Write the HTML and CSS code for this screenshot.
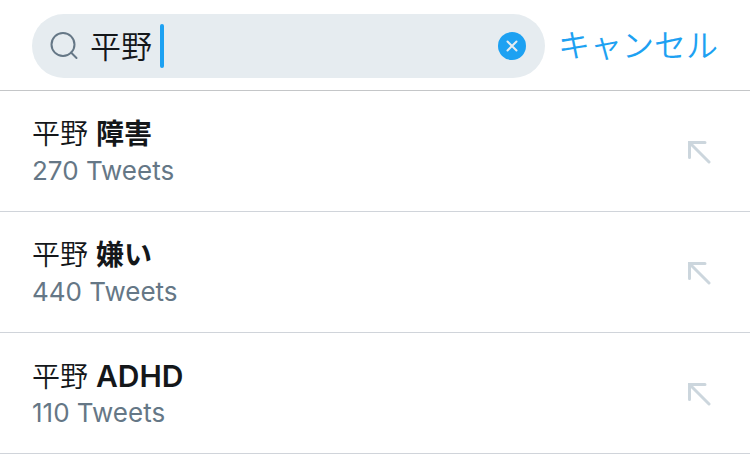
FILE: index.html
```html
<!DOCTYPE html>
<html lang="ja">
<head>
<meta charset="utf-8">
<meta name="viewport" content="width=device-width, initial-scale=1">
<title>平野</title>
<link rel="stylesheet" href="styles.css">
</head>
<body>
<form class="search-bar" role="search">
  <div class="search-field">
    <svg class="search-icon" viewBox="0 0 28 28" aria-hidden="true"><circle cx="13" cy="12.5" r="11.5"/><path d="M21 20.5L26.5 26"/></svg>
    <div class="query">
      <input class="query-input" type="text" value="平野" aria-label="検索">
      <span class="caret"></span>
    </div>
    <button class="clear" type="button" aria-label="消去"><svg viewBox="0 0 28 28" aria-hidden="true"><path d="M9.5 9.5L18.5 18.5M18.5 9.5L9.5 18.5"/></svg></button>
  </div>
  <button class="cancel" type="button">キャンセル</button>
</form>
<ul class="suggestions">
  <li><a class="suggestion" href="#">
    <span class="text"><span class="term">平野 <b>障害</b></span><span class="count">270 Tweets</span></span>
    <svg class="arrow" viewBox="0 0 24 24" aria-hidden="true"><path d="M2.5 17.5V2.5H18M2.5 2.5L22 22"/></svg>
  </a></li>
  <li><a class="suggestion" href="#">
    <span class="text"><span class="term">平野 <b>嫌い</b></span><span class="count">440 Tweets</span></span>
    <svg class="arrow" viewBox="0 0 24 24" aria-hidden="true"><path d="M2.5 17.5V2.5H18M2.5 2.5L22 22"/></svg>
  </a></li>
  <li><a class="suggestion" href="#">
    <span class="text"><span class="term">平野 <b class="latin">ADHD</b></span><span class="count">110 Tweets</span></span>
    <svg class="arrow" viewBox="0 0 24 24" aria-hidden="true"><path d="M2.5 17.5V2.5H18M2.5 2.5L22 22"/></svg>
  </a></li>
</ul>
</body>
</html>
```
FILE: styles.css
```css
* {
  box-sizing: border-box;
}

body {
  margin: 0;
  background: #fff;
  color: #14171a;
  font-family: Inter, "Noto Sans CJK JP", sans-serif;
}

button {
  border: 0;
  padding: 0;
  background: none;
  font: inherit;
  cursor: pointer;
}

.search-bar {
  display: flex;
  align-items: center;
  gap: 13px;
  padding: 14px 32px 12px;
  border-bottom: 1px solid #c4c6c8;
}

.search-field {
  display: flex;
  flex: 1;
  align-items: center;
  gap: 12px;
  min-width: 0;
  height: 64px;
  padding: 0 19px 0 18px;
  border-radius: 32px;
  background: #e6ecf0;
}

.search-icon {
  flex: none;
  width: 28px;
  height: 28px;
  fill: none;
  stroke: #657786;
  stroke-width: 2;
  stroke-linecap: round;
}

.query {
  position: relative;
  flex: 1;
  min-width: 0;
}

.query-input {
  display: block;
  width: 100%;
  height: 44px;
  padding: 0 0 4px;
  border: 0;
  outline: 0;
  background: none;
  color: inherit;
  font-family: inherit;
  font-size: 31px;
  font-weight: 350;
}

.caret {
  position: absolute;
  top: 0;
  left: 70px;
  width: 4px;
  height: 44px;
  border-radius: 2px;
  background: #1da1f2;
}

.clear {
  flex: none;
  width: 28px;
  height: 28px;
  border-radius: 50%;
  background: #1da1f2;
}

.clear svg {
  display: block;
  fill: none;
  stroke: #e6ecf0;
  stroke-width: 2;
  stroke-linecap: round;
}

.cancel {
  flex: none;
  color: #1da1f2;
  font-size: 32px;
  font-weight: 350;
  line-height: 44px;
}

.suggestions {
  margin: 0;
  padding: 0;
  list-style: none;
}

.suggestion {
  display: flex;
  align-items: center;
  justify-content: space-between;
  padding: 24px 39px 22px 32px;
  border-bottom: 1px solid #d0d4da;
  color: inherit;
  text-decoration: none;
}

.text {
  display: flex;
  flex-direction: column;
}

.term {
  height: 38px;
  font-size: 28px;
  font-weight: 350;
  line-height: 38px;
}

.term b {
  font-weight: 600;
}

.term .latin {
  font-size: 30px;
}

.count {
  color: #657786;
  font-size: 26px;
  line-height: 36px;
}

.arrow {
  flex: none;
  width: 24px;
  height: 24px;
  fill: none;
  stroke: #ccd6dd;
  stroke-width: 3;
  stroke-linecap: round;
}
```
